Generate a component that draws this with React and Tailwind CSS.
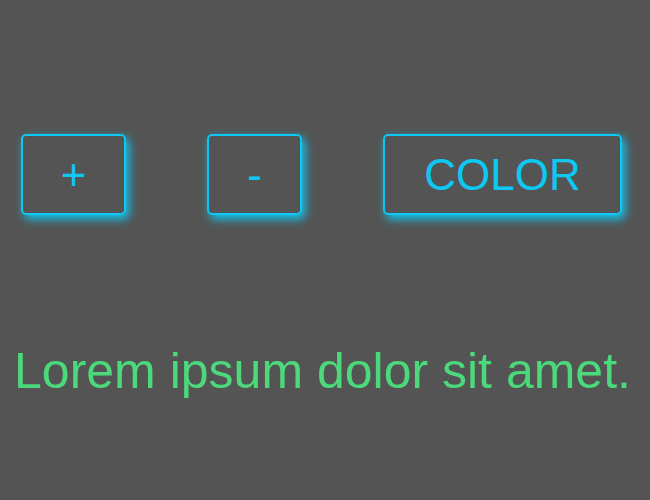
import React from 'react';

const GlowButton = ({ children, className = '' }) => (
  <button
    className={`h-[81px] border-2 border-[#0cc8f2] rounded-[5px] text-[44px] leading-none text-[#0cc8f2] shadow-[3px_4px_10px_#0cc8f2] ${className}`}
  >
    {children}
  </button>
);

const App = () => {
  return (
    <div className="w-[650px] h-[500px] bg-[#545454] font-['Liberation_Sans',Arial,sans-serif] pt-[134px]">
      <div className="flex items-center pl-[21px] gap-[81px]">
        <GlowButton className="w-[105px]">+</GlowButton>
        <GlowButton className="w-[95px]">-</GlowButton>
        <GlowButton className="w-[239px]">COLOR</GlowButton>
      </div>
      <p className="mt-[131px] pr-[5px] text-center text-[50px] leading-none text-[#4cd97b]">
        Lorem ipsum dolor sit amet.
      </p>
    </div>
  );
};

export default App;
